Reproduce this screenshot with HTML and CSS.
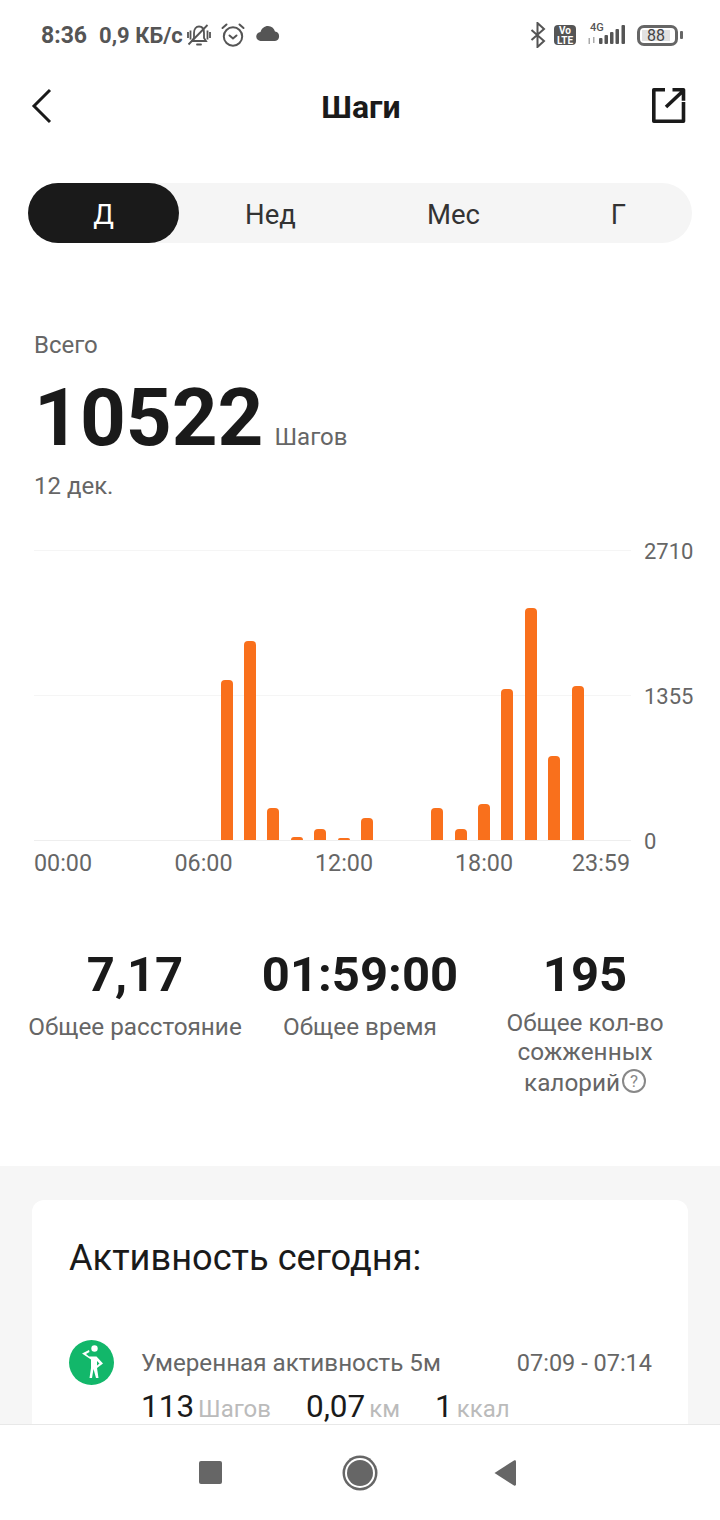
FILE: index.html
```html
<!DOCTYPE html>
<html lang="ru">
<head>
    <meta charset="UTF-8">
    <meta name="viewport" content="width=device-width, initial-scale=1.0">
    <title>Шаги</title>
    <link rel="stylesheet" href="styles.css">
</head>
<body>
    <div class="status-bar">
        <div class="status-left">
            <span class="status-time">8:36</span>
            <span class="status-speed">0,9 КБ/с</span>
            <svg class="ic-bell" width="24" height="22" viewBox="0 0 24 22" fill="none" stroke="#555" stroke-width="1.800">
                <path d="M5 17l2-3V9c0-4 2-6.500 5-6.500S17 5 17 9v5l2 3z"/>
                <path d="M10 20.500h4" stroke-linecap="round"/>
                <path d="M1.500 20.500L20.500 1"/>
                <path d="M1 8v6M3.500 6.500v9M23 8v6M20.500 6.500v9"/>
            </svg>
            <svg class="ic-alarm" width="24" height="24" viewBox="0 0 24 24" fill="none" stroke="#555" stroke-width="2">
                <circle cx="12" cy="13.500" r="9.200"/>
                <path d="M8.500 12.500l3.500 3 3.500-3" stroke-linecap="round"/>
                <path d="M1.500 5l4-3.500M22.500 5l-4-3.500" stroke-linecap="round"/>
            </svg>
            <svg class="ic-cloud" width="24" height="15" viewBox="0 0 24 15" fill="#555">
                <path d="M5 15a4.500 4.500 0 0 1-.5-9C5.500 2.500 8.500 0 12 0c3.500 0 6 2.200 7 5.500a4.800 4.800 0 0 1 0 9.500z"/>
            </svg>
        </div>
        <div class="status-right">
            <svg width="18" height="26" viewBox="0 0 18 26" fill="none" stroke="#555" stroke-width="2">
                <path d="M3.500 8L16 19l-6.500 6V1L16 7 3.500 18"/>
            </svg>
            <span class="volte">Vo<br>LTE</span>
            <span class="signal">
                <span class="signal-4g">4G</span>
                <svg width="38" height="22" viewBox="0 0 38 22" fill="#555">
                    <rect x="0.500" y="14" width="1.500" height="6" fill="#aaa"/>
                    <rect x="5" y="13" width="1.500" height="6" fill="#aaa"/>
                    <rect x="11" y="14" width="3.500" height="6" rx="1"/>
                    <rect x="16.500" y="11" width="3.500" height="9" rx="1"/>
                    <rect x="22" y="8" width="3.500" height="12" rx="1"/>
                    <rect x="27.500" y="5" width="3.500" height="15" rx="1"/>
                    <rect x="33.500" y="1" width="3.500" height="19" rx="1"/>
                </svg>
            </span>
            <span class="battery"><span class="battery-level">88</span></span>
            <span class="battery-tip"></span>
        </div>
    </div>

    <main class="content">
        <header class="top-bar">
            <svg width="24" height="36" viewBox="0 0 24 36" fill="none" stroke="#1a1a1a" stroke-width="3">
                <path d="M20 2L4 18l16 16"/>
            </svg>
            <h1 class="page-title">Шаги</h1>
            <svg width="34" height="35" viewBox="0 0 34 35" fill="none" stroke="#1a1a1a" stroke-width="3.600" stroke-linejoin="round">
                <path d="M13 1.800H1.800V33.200H31.500V14"/>
                <path d="M14 19L31 3M20.500 1.800h11v11"/>
            </svg>
        </header>

        <div class="tabs">
            <div class="tab tab-active">Д</div>
            <div class="tab">Нед</div>
            <div class="tab">Мес</div>
            <div class="tab">Г</div>
        </div>

        <section class="total">
            <div class="total-label">Всего</div>
            <div class="total-value"><span class="total-num">10522</span><span class="total-unit">Шагов</span></div>
            <div class="total-date">12 дек.</div>
        </section>

        <section class="chart">
            <div class="chart-row"><span class="chart-y">2710</span></div>
            <div class="chart-row"><span class="chart-y">1355</span></div>
            <div class="chart-zero"><span class="chart-y">0</span></div>
            <div class="bars">
                <div class="bar" style="height:160px"></div>
                <div class="bar" style="height:199px"></div>
                <div class="bar" style="height:32px"></div>
                <div class="bar" style="height:3px"></div>
                <div class="bar" style="height:11px"></div>
                <div class="bar" style="height:2px"></div>
                <div class="bar" style="height:22px"></div>
                <div class="bar" style="height:0"></div>
                <div class="bar" style="height:0"></div>
                <div class="bar" style="height:32px"></div>
                <div class="bar" style="height:11px"></div>
                <div class="bar" style="height:36px"></div>
                <div class="bar" style="height:151px"></div>
                <div class="bar" style="height:232px"></div>
                <div class="bar" style="height:84px"></div>
                <div class="bar" style="height:154px"></div>
            </div>
            <div class="chart-x">
                <span>00:00</span><span>06:00</span><span>12:00</span><span>18:00</span><span>23:59</span>
            </div>
        </section>

        <section class="stats">
            <div class="stat stat-dist">
                <div class="stat-value">7,17</div>
                <div class="stat-label">Общее расстояние</div>
            </div>
            <div class="stat stat-time">
                <div class="stat-value">01:59:00</div>
                <div class="stat-label">Общее время</div>
            </div>
            <div class="stat stat-cal">
                <div class="stat-value">195</div>
                <div class="stat-label">Общее кол-во сожженных <span class="stat-last">калорий<span class="help">?</span></span></div>
            </div>
        </section>

        <section class="activity-wrap">
            <div class="activity-card">
                <h2 class="activity-title">Активность сегодня:</h2>
                <div class="activity-item">
                    <svg class="activity-icon" width="45" height="45" viewBox="0 0 45 45">
                        <circle cx="22.500" cy="22.500" r="22.500" fill="#12b76a"/>
                        <circle cx="25.500" cy="8.500" r="3.200" fill="#fff"/>
                        <path d="M13 13.500l7-3.500.5 2-3.500 2 3 2.500h7.500l6.500 7-6 4.500-.5-2 3-2.500-2.500-2.500V28l1.500 10h-2.500l-2.500-9-1.500 9h-2.500l1.500-10v-8.500z" fill="#fff"/>
                    </svg>
                    <div class="activity-body">
                        <div class="activity-head">
                            <span class="activity-name">Умеренная активность 5м</span>
                            <span>07:09 - 07:14</span>
                        </div>
                        <div class="activity-nums">
                            <span><b>113</b> Шагов</span>
                            <span><b>0,07</b> км</span>
                            <span><b>1</b> ккал</span>
                        </div>
                    </div>
                </div>
            </div>
        </section>
    </main>

    <nav class="nav-bar">
        <span class="nav-square"></span>
        <span class="nav-circle"></span>
        <svg width="22" height="26" viewBox="0 0 22 26" fill="#666"><path d="M22 1.500v23c0 1-1 1.500-2 1L.5 13 20 .5c1-.5 2 0 2 1z"/></svg>
    </nav>
</body>
</html>
```

FILE: styles.css
```css
* {
    box-sizing: border-box;
}
body {
    margin: 0;
    width: 720px;
    height: 1520px;
    display: flex;
    flex-direction: column;
    overflow: hidden;
    background-color: #fff;
    font-family: Roboto, "Liberation Sans", sans-serif;
    color: #1a1a1a;
}

/* status bar */
.status-bar {
    height: 70px;
    flex: none;
    display: flex;
    justify-content: space-between;
    align-items: center;
    padding: 0 37px 0 41px;
    color: #555;
}
.status-left {
    display: flex;
    align-items: center;
    font-size: 23px;
    font-weight: 700;
}
.status-speed {
    margin-left: 12px;
    font-size: 22px;
}
.ic-bell {
    margin-left: 4px;
}
.ic-alarm {
    margin-left: 10px;
}
.ic-cloud {
    margin-left: 11px;
    margin-top: -3px;
}
.status-right {
    display: flex;
    align-items: center;
}
.volte {
    margin-left: 8px;
    width: 22px;
    height: 20px;
    border-radius: 4px;
    background-color: #555;
    color: #fff;
    font-size: 10px;
    font-weight: 700;
    line-height: 9.500px;
    text-align: center;
    padding-top: 1px;
}
.signal {
    position: relative;
    margin-left: 12px;
    display: flex;
}
.signal-4g {
    position: absolute;
    left: 2px;
    top: -3px;
    font-size: 11px;
    font-weight: 500;
}
.battery {
    margin-left: 11px;
    width: 41px;
    height: 21px;
    border: 3px solid #666;
    border-radius: 7px;
    padding: 2px;
    display: flex;
}
.battery-level {
    width: 28px;
    background-color: #e2e2e2;
    font-size: 16px;
    line-height: 11px;
    font-weight: 400;
    text-align: center;
    color: #444;
}
.battery-tip {
    width: 3px;
    height: 8px;
    margin-left: 2px;
    background-color: #666;
    border-radius: 1px;
}

.content {
    flex: 1;
    overflow: hidden;
}

/* title */
.top-bar {
    height: 75px;
    display: flex;
    justify-content: space-between;
    align-items: center;
    padding: 0 34px 4px 30px;
}
.page-title {
    margin: 2px 0 0 16px;
    font-size: 32px;
    font-weight: 700;
}

/* period switch */
.tabs {
    margin: 38px 28px 0;
    height: 60px;
    display: grid;
    grid-template-columns: 151px 183px 183px 147px;
    border-radius: 30px;
    background-color: #f5f5f5;
}
.tab {
    display: flex;
    align-items: center;
    justify-content: center;
    padding-top: 3px;
    font-size: 27.500px;
    color: #333;
}
.tab-active {
    background-color: #1a1a1a;
    color: #fff;
    border-radius: 30px;
}

/* total */
.total {
    margin-top: 88px;
    padding-left: 34px;
}
.total-label, .total-date {
    font-size: 24px;
    line-height: 28px;
    color: #666;
}
.total-value {
    margin-top: 19px;
    height: 80px;
    display: flex;
    align-items: baseline;
}
.total-num {
    font-size: 80px;
    line-height: 80px;
    font-weight: 700;
}
.total-unit {
    margin-left: 11px;
    font-size: 24px;
    color: #666;
}
.total-date {
    margin-top: 14px;
}

/* chart */
.chart {
    position: relative;
    margin-top: 50px;
    padding: 0 28px 0 34px;
}
.chart-row {
    height: 145px;
    border-top: 1px solid #f5f5f5;
    margin-right: 61px;
    position: relative;
}
.chart-zero {
    height: 30px;
    border-top: 1px solid #eee;
    margin-right: 61px;
    position: relative;
}
.chart-y {
    position: absolute;
    left: 100%;
    top: -12px;
    margin-left: 13px;
    font-size: 22px;
    line-height: 26px;
    color: #666;
    white-space: nowrap;
}
.bars {
    position: absolute;
    top: 0;
    left: 220.700px;
    height: 290px;
    display: flex;
    align-items: flex-end;
    gap: 11.400px;
}
.bar {
    width: 12px;
    background-color: #f9701c;
    border-radius: 4px 4px 0 0;
}
.chart-x {
    margin-top: -21px;
    display: grid;
    grid-template-columns: 140.500px 140.500px 140px 117px auto;
    font-size: 23.300px;
    line-height: 28px;
    color: #666;
}

/* summary */
.stats {
    margin-top: 70px;
    height: 219px;
    padding: 0 20px;
    display: grid;
    grid-template-columns: 230px 220px 230px;
    text-align: center;
}
.stat-value {
    font-size: 49px;
    line-height: 56px;
    font-weight: 700;
}
.stat-label {
    margin-top: 9px;
    font-size: 24.300px;
    line-height: 29px;
    color: #666;
}
.stat-cal {
    padding: 0 20px;
}
.stat-cal .stat-label {
    margin-top: 5px;
}
.stat-last {
    display: block;
    margin-top: 2px;
}
.help {
    display: inline-block;
    width: 24px;
    height: 24px;
    margin-left: 2px;
    border: 2px solid #888;
    border-radius: 50%;
    font-size: 17px;
    line-height: 20px;
    color: #888;
    vertical-align: 4px;
}

/* today's activity */
.activity-wrap {
    background-color: #f6f6f6;
    padding: 34px 32px 0;
    height: 300px;
}
.activity-card {
    height: 300px;
    background-color: #fff;
    border-radius: 12px;
    padding: 36px 36px 0 37px;
}
.activity-title {
    margin: 0;
    font-size: 36.200px;
    line-height: 44px;
    font-weight: 400;
}
.activity-item {
    margin-top: 62px;
    display: flex;
}
.activity-icon {
    flex: none;
    margin-top: -2px;
}
.activity-body {
    flex: 1;
    margin-left: 27px;
}
.activity-head {
    display: flex;
    justify-content: space-between;
    font-size: 23.500px;
    line-height: 28px;
    color: #666;
    margin-top: 7px;
}
.activity-name {
    font-size: 24.200px;
}
.activity-nums {
    display: flex;
    gap: 35px;
    margin-top: 14px;
    font-size: 24px;
    line-height: 32px;
    word-spacing: -2px;
    color: #bbb;
}
.activity-nums b {
    font-size: 31.500px;
    font-weight: 400;
    color: #1a1a1a;
}

/* system nav */
.nav-bar {
    flex: none;
    height: 96px;
    border-top: 1px solid #e8e8e8;
    background-color: #fff;
    display: flex;
    align-items: center;
    padding-left: 199px;
}
.nav-square {
    width: 23px;
    height: 23px;
    background-color: #666;
    border-radius: 2px;
}
.nav-circle {
    width: 26px;
    height: 26px;
    margin: 0 121.500px 0 124.500px;
    border-radius: 50%;
    background-color: #666;
    box-shadow: 0 0 0 2px #fff, 0 0 0 4.500px #666;
}
```
